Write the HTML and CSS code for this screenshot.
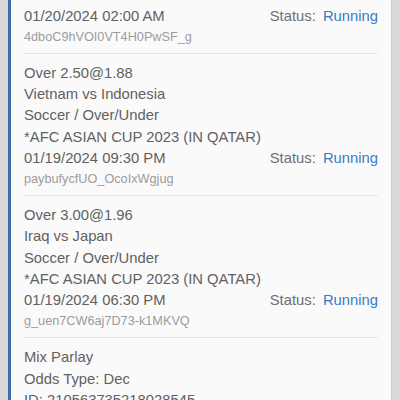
FILE: index.html
```html
<!DOCTYPE html>
<html lang="en">
  <head>
    <meta charset="UTF-8" />
    <meta name="viewport" content="width=device-width, initial-scale=1.0" />
    <title>Bet List</title>
    <link rel="stylesheet" href="styles.css">
  </head>
  <body>
    <div class="card">
      <div class="bet first">
        <div class="line row">
          <span>01/20/2024 02:00 AM</span>
          <span class="status">Status: <span class="running">Running</span></span>
        </div>
        <div class="ref">4dboC9hVOI0VT4H0PwSF_g</div>
      </div>
      <div class="bet">
        <div class="line">Over 2.50@1.88</div>
        <div class="line">Vietnam vs Indonesia</div>
        <div class="line">Soccer / Over/Under</div>
        <div class="line">*AFC ASIAN CUP 2023 (IN QATAR)</div>
        <div class="line row">
          <span>01/19/2024 09:30 PM</span>
          <span class="status">Status: <span class="running">Running</span></span>
        </div>
        <div class="ref">paybufycfUO_OcoIxWgjug</div>
      </div>
      <div class="bet">
        <div class="line">Over 3.00@1.96</div>
        <div class="line">Iraq vs Japan</div>
        <div class="line">Soccer / Over/Under</div>
        <div class="line">*AFC ASIAN CUP 2023 (IN QATAR)</div>
        <div class="line row">
          <span>01/19/2024 06:30 PM</span>
          <span class="status">Status: <span class="running">Running</span></span>
        </div>
        <div class="ref">g_uen7CW6aj7D73-k1MKVQ</div>
      </div>
      <div class="bet">
        <div class="line">Mix Parlay</div>
        <div class="line">Odds Type: Dec</div>
        <div class="line">ID: 210563735218028545</div>
      </div>
    </div>
  </body>
</html>
```

FILE: styles.css
```css
html,
body {
  height: 100%;
  overflow: hidden;
}
body {
  margin: 0;
  padding: 0 8px;
  background: #d9d9d9;
  font-family: "Liberation Sans", Arial, sans-serif;
  color: #616161;
}
.card {
  height: 100%;
  overflow: hidden;
  background: #fafafa;
  border-left: 3px solid #3f6ea4;
  border-right: 1px solid #cdcdcd;
  padding: 0 13px;
}
.bet {
  padding: 9px 0 6px;
  border-bottom: 1px solid #e6e6e6;
}
.bet.first {
  padding-top: 5.5px;
}
.line {
  font-size: 14.8px;
  line-height: 21.25px;
}
.row {
  display: flex;
  justify-content: space-between;
}
.status {
  color: #6f6f6f;
}
.running {
  color: #3b7cc2;
  margin-left: 3px;
}
.ref {
  font-size: 12.7px;
  line-height: 20px;
  color: #9c9c9c;
}
```
